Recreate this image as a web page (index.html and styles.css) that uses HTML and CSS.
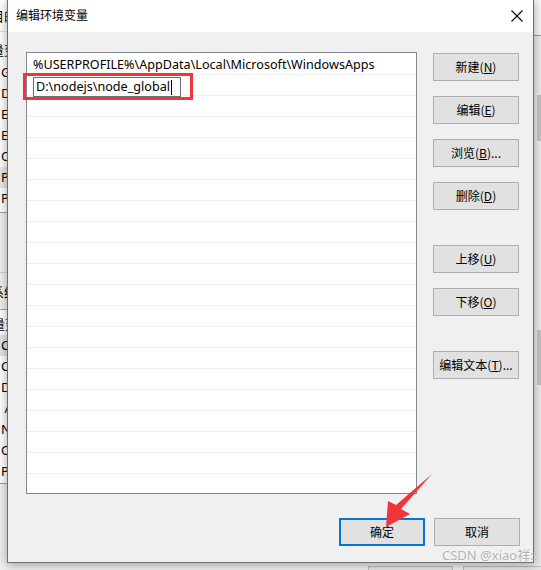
FILE: index.html
```html
<!DOCTYPE html>
<html lang="zh-CN">
<head>
<meta charset="utf-8">
<title>编辑环境变量</title>
<link rel="stylesheet" href="styles.css">
</head>
<body>
<div class="desk">
  <div class="back">
    <div class="back-left">
      <div class="bl-top"><span class="cut">目的</span></div>
      <div class="bl-hdr"><span class="cut">量变</span></div>
      <div class="bl-list">
        <div class="bl-row">GOPATH</div>
        <div class="bl-row">DriverData</div>
        <div class="bl-row">EDITOR</div>
        <div class="bl-row">EDITOR_HOME</div>
        <div class="bl-row">OneDrive</div>
        <div class="bl-row sel">Path</div>
        <div class="bl-row">PHP_HOME</div>
      </div>
      <div class="bl-gap"></div>
      <div class="bl-sec"><span class="cut">系统</span></div>
      <div class="bl-list2">
        <div class="bl-row"><span class="cut">量变</span></div>
        <div class="bl-row sel2">CLASSPATH</div>
        <div class="bl-row">ComSpec</div>
        <div class="bl-row">DriverData</div>
        <div class="bl-row">&nbsp;ANDROID</div>
        <div class="bl-row">NUMBER_OF</div>
        <div class="bl-row">OS</div>
        <div class="bl-row">Path</div>
      </div>
    </div>
    <div class="back-right">
      <div class="br-top"></div>
      <div class="br-body">
        <div class="br-thumb t1"></div>
        <div class="br-thumb t2"></div>
      </div>
    </div>
    <div class="back-bottom">
      <span class="bb-btn"></span><span class="bb-btn"></span>
    </div>
  </div>

  <div class="dialog">
    <div class="titlebar">
      <span class="title">编辑环境变量</span>
      <svg class="close" width="12" height="12" viewBox="0 0 12 12"><path d="M0.5 0.5 L11.5 11.5 M11.5 0.5 L0.5 11.5" stroke="#000" stroke-width="1.1" fill="none"/></svg>
    </div>
    <div class="body">
      <div class="main">
        <div class="list">
          <div class="row">%USERPROFILE%\AppData\Local\Microsoft\WindowsApps</div>
          <div class="row"><span class="edit">D:\nodejs\node_global<span class="caret"></span></span></div>
          <div class="row"></div><div class="row"></div><div class="row"></div><div class="row"></div>
          <div class="row"></div><div class="row"></div><div class="row"></div><div class="row"></div>
          <div class="row"></div><div class="row"></div><div class="row"></div><div class="row"></div>
          <div class="row"></div><div class="row"></div><div class="row"></div><div class="row"></div>
          <div class="row"></div><div class="row"></div><div class="row last"></div>
        </div>
        <div class="btns">
          <button class="btn">新建(<u>N</u>)</button>
          <button class="btn">编辑(<u>E</u>)</button>
          <button class="btn">浏览(<u>B</u>)...</button>
          <button class="btn">删除(<u>D</u>)</button>
          <button class="btn sep">上移(<u>U</u>)</button>
          <button class="btn">下移(<u>O</u>)</button>
          <button class="btn sep">编辑文本(<u>T</u>)...</button>
        </div>
      </div>
      <div class="foot">
        <button class="btn primary">确定</button>
        <button class="btn">取消</button>
      </div>
    </div>
  </div>

  <div class="redbox"></div>
  <svg class="arrow" width="541" height="570" viewBox="0 0 541 570">
    <polygon points="432,474 401,509 410,514 386,527 388,501 396,505" fill="#f2353a"/>
  </svg>
  <div class="wm">CSDN @xiao祥::</div>
</div>
</body>
</html>
```

FILE: styles.css
```css
* { box-sizing: border-box; }

body {
  margin: 0;
  background: #f0f0f0;
  font-family: "Noto Sans", "Noto Sans CJK SC", sans-serif;
  font-size: 12px;
  color: #000;
}

.desk {
  position: relative;
  width: 541px;
  height: 570px;
  overflow: hidden;
}

/* window behind the dialog */
.back {
  position: absolute;
  left: 0;
  top: 0;
  width: 541px;
  height: 570px;
  background: #f0f0f0;
}

.back-left {
  width: 120px;
  display: flex;
  flex-direction: column;
  background: #fff;
}

.cut {
  display: inline-block;
  margin-left: -9px;
}

.bl-top {
  height: 31px;
  line-height: 31px;
  font-size: 13px;
  font-family: "Noto Sans CJK SC", sans-serif;
}

.bl-hdr {
  height: 31px;
  line-height: 31px;
  padding-top: 2px;
  font-size: 13px;
  font-family: "Noto Sans CJK SC", sans-serif;
  border-top: 1px solid #e0e0e0;
}

.bl-list {
  height: 151px;
  border-bottom: 1px solid #a0a0a0;
}

.bl-row {
  height: 21px;
  line-height: 21px;
  padding-left: 1px;
  white-space: nowrap;
  font-size: 13px;
}

.bl-row.sel { background: #e8e8e8; }
.bl-row.sel2 { background: #e3e3e3; }

.bl-gap {
  height: 60px;
  background: #f0f0f0;
  border-bottom: 1px solid #d0d0d0;
}

.bl-sec {
  height: 37px;
  line-height: 37px;
  background: #f0f0f0;
  border-bottom: 1px solid #a8a8a8;
  font-size: 13px;
  font-family: "Noto Sans CJK SC", sans-serif;
}

.bl-list2 {
  padding-top: 4px;
  height: 174px;
  border-bottom: 1px solid #a0a0a0;
}

.back-right {
  position: absolute;
  right: 0;
  top: 0;
  width: 8px;
  height: 570px;
  display: flex;
  flex-direction: column;
}

.br-top {
  height: 36px;
  background: #f8f8f8;
  border-bottom: 1px solid #9a9a9a;
}

.br-body {
  flex: 1;
  position: relative;
  background: #ececec;
  border-left: 1px solid #dcdcdc;
}

.br-thumb {
  position: absolute;
  right: 0;
  width: 4px;
  background: #c4c4c4;
}
.br-thumb.t1 { top: 59px; height: 46px; }
.br-thumb.t2 { top: 294px; height: 55px; }

.back-bottom {
  position: absolute;
  left: 368px;
  top: 566px;
  display: flex;
  gap: 10px;
}
.bb-btn {
  width: 85px;
  height: 20px;
  border: 1px solid #bdbdbd;
  background: #e6e6e6;
}

/* dialog */
.dialog {
  position: absolute;
  left: 7px;
  top: -1px;
  width: 527px;
  height: 564px;
  border: 1px solid #6f6f6f;
  background: #f0f0f0;
  box-shadow: 0 2px 10px rgba(0, 0, 0, 0.35);
  display: flex;
  flex-direction: column;
}

.titlebar {
  height: 32px;
  background: #fff;
  display: flex;
  align-items: center;
  justify-content: space-between;
  padding: 0 10px 2px 8px;
  flex: none;
}

.title {
  font-family: "Noto Sans CJK SC", sans-serif;
  font-size: 12px;
  line-height: 16px;
}

.close {
  display: block;
  margin-top: 1px;
}

.body {
  flex: 1;
  padding: 20px 13px 0 18px;
  display: flex;
  flex-direction: column;
}

.main {
  display: flex;
  align-items: flex-start;
}

.list {
  width: 391px;
  height: 442px;
  background: #fff;
  border: 1px solid #828790;
  padding-top: 1px;
  overflow: hidden;
}

.row {
  height: 21px;
  border-bottom: 1px solid #f0f0f0;
  padding-left: 6px;
  line-height: 21px;
  font-size: 12.6px;
  white-space: nowrap;
  display: flex;
  align-items: flex-start;
}

.row.last { border-bottom: none; }

.edit {
  position: relative;
  z-index: 1;
  margin-top: 2px;
  width: 148px;
  height: 20px;
  border: 1px solid #6e6e6e;
  background: #fff;
  padding-left: 2px;
  line-height: 18px;
  display: flex;
  align-items: center;
}

.caret {
  display: inline-block;
  width: 1px;
  height: 15px;
  background: #000;
  margin-left: 1px;
}

.btns {
  margin-left: 16px;
  margin-top: 1px;
  display: flex;
  flex-direction: column;
  gap: 15px;
}

.btn {
  width: 86px;
  height: 28px;
  margin: 0;
  padding: 0;
  background: #e1e1e1;
  border: 1px solid #adadad;
  font-family: "Noto Sans CJK SC", sans-serif;
  font-size: 12px;
  color: #000;
  line-height: 16px;
}

.btn u { text-underline-offset: 1px; }

.btn.sep { margin-top: 20px; }

.foot {
  margin-top: 24px;
  display: flex;
  justify-content: flex-end;
  gap: 9px;
}

.btn.primary {
  border: 2px solid #0078d7;
}

/* annotations */
.redbox {
  position: absolute;
  left: 23px;
  top: 73px;
  width: 170px;
  height: 27px;
  border: 3px solid #f2353a;
}

.arrow {
  position: absolute;
  left: 0;
  top: 0;
  pointer-events: none;
}

.wm {
  position: absolute;
  left: 442px;
  top: 545px;
  font-family: "Noto Sans", "Noto Sans CJK SC", sans-serif;
  font-size: 13px;
  color: #b4b4b4;
  white-space: nowrap;
  text-shadow: 0 0 2px #fff;
}
```
